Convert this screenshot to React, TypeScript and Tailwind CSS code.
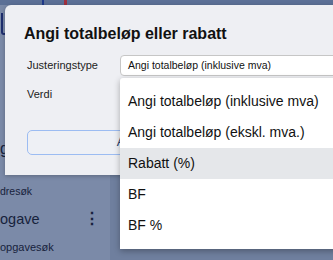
import React from "react";

const options = [
  "Angi totalbeløp (inklusive mva)",
  "Angi totalbeløp (ekskl. mva.)",
  "Rabatt (%)",
  "BF",
  "BF %",
];

function Sidebar() {
  return (
    <div className="flex h-full w-full flex-col bg-[#7384a3]">
      <div className="flex h-[5px] items-end bg-[#5c7096]">
        <span className="ml-[42px] h-[5px] w-[2px] bg-[#1f3a8a]" />
        <span className="ml-[20px] h-[5px] w-[3px] bg-[#a0303e]" />
      </div>
      <div className="flex flex-1">
        <aside className="flex w-[110px] flex-col bg-[#7b8aa8] text-[#17223c]">
          <div className="ml-[1px] mt-[8px] h-[22px] w-[6px] rounded-b-[3px] border-x-2 border-b-2 border-[#1d2d6e]" />
          <div className="mt-[104px] text-[16px] leading-[20px]">g</div>
          <div className="mt-[24px] text-[10.5px] leading-[16px]">dresøk</div>
          <div className="mt-[9px] flex items-center justify-between pr-[10px]">
            <span className="text-[14.5px] leading-[22px]">ogave</span>
            <span className="text-[16px] font-bold leading-[20px]">⋮</span>
          </div>
          <div className="mt-[9px] text-[11px] leading-[16px]">opgavesøk</div>
        </aside>
        <main className="flex-1 bg-[#6f7f9e]" />
      </div>
    </div>
  );
}

export default function App() {
  return (
    <div
      className="relative h-[260px] w-[333px] overflow-hidden"
      style={{ fontFamily: '"Liberation Sans", Arial, sans-serif' }}
    >
      <Sidebar />
      <div className="absolute left-[5px] top-[5px] h-[170px] w-[400px] rounded-tl-[6px] bg-[#eeeff3] shadow-[0_1px_4px_rgba(0,0,0,0.25)]">
        <h2 className="pl-[19px] pt-[19px] text-[16px] font-bold leading-[20px] text-[#111]">
          Angi totalbeløp eller rabatt
        </h2>
        <div className="mt-[11px] grid grid-cols-[93px_1fr] items-center pl-[22px]">
          <span className="text-[11px] text-[#222]">Justeringstype</span>
          <div className="flex h-[21px] items-center rounded-[4px] border border-[#c6c6c6] bg-white pl-[7px] text-[10.5px] text-[#111]">
            Angi totalbeløp (inklusive mva)
          </div>
          <span className="mt-[10px] self-start text-[11px] text-[#222]">Verdi</span>
        </div>
        <div className="mt-[27px] pl-[22px]">
          <button className="flex h-[25px] w-[216px] items-center justify-center rounded-[5px] border border-[#9cbcf2] bg-[#eef0f5] text-[13px] text-[#2a3f6e]">
            Avbryt
          </button>
        </div>
      </div>
      <ul className="absolute left-[120px] top-[78px] w-[240px] rounded-tl-[3px] bg-white py-[8px] shadow-[0_2px_6px_rgba(0,0,0,0.3)]">
        {options.map((opt) => (
          <li
            key={opt}
            className={
              opt === "Rabatt (%)"
                ? "flex h-[31px] items-center bg-[#e5e7ea] pl-[8px] text-[14px] text-[#111]"
                : "flex h-[31px] items-center pl-[8px] text-[14px] text-[#111]"
            }
          >
            {opt}
          </li>
        ))}
      </ul>
    </div>
  );
}
